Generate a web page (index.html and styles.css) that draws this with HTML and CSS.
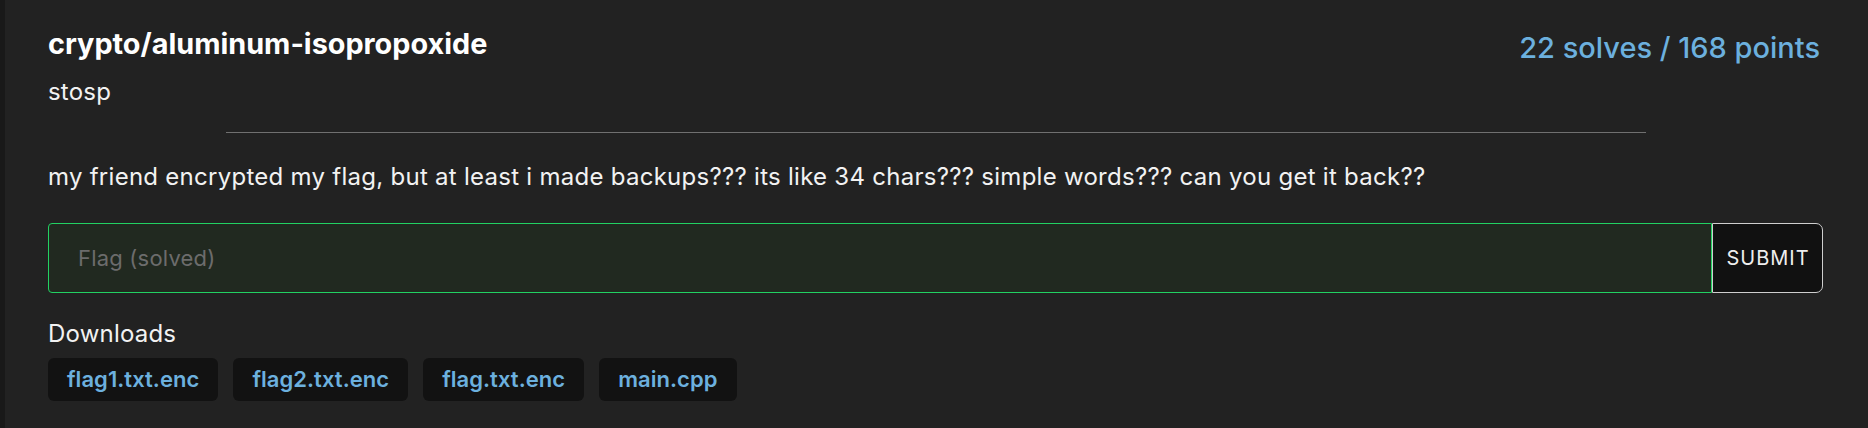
FILE: index.html
```html
<!DOCTYPE html>
<html lang="en">
<head>
<meta charset="utf-8">
<title>crypto/aluminum-isopropoxide</title>
<link rel="stylesheet" href="styles.css">
</head>
<body>
<div class="page">
  <section class="challenge">
    <div class="header">
      <h1 class="title">crypto/aluminum-isopropoxide</h1>
      <div class="stats">22 solves / 168 points</div>
    </div>
    <div class="author">stosp</div>
    <hr class="divider">
    <p class="description">my friend encrypted my flag, but at least i made backups??? its like 34 chars??? simple words??? can you get it back??</p>
    <form class="flag-form">
      <input class="flag-input" type="text" placeholder="Flag (solved)">
      <button class="submit" type="button">SUBMIT</button>
    </form>
    <div class="downloads-label">Downloads</div>
    <div class="downloads">
      <a class="chip" href="#">flag1.txt.enc</a>
      <a class="chip" href="#">flag2.txt.enc</a>
      <a class="chip" href="#">flag.txt.enc</a>
      <a class="chip" href="#">main.cpp</a>
    </div>
  </section>
</div>
</body>
</html>
```
FILE: styles.css
```css
* { box-sizing: border-box; }
html, body { margin: 0; padding: 0; }
body {
  background: #222222;
  font-family: Inter, "Noto Sans", "Liberation Sans", sans-serif;
  color: #f2f2f2;
  height: 428px;
  overflow: hidden;
}
.page {
  border-left: 5px solid #191919;
  min-height: 428px;
}
.challenge {
  padding: 26px 45px 0 43px;
  display: flex;
  flex-direction: column;
}
.header {
  display: flex;
  justify-content: space-between;
  align-items: flex-start;
}
.title {
  margin: 0;
  font-size: 28.8px;
  line-height: 35px;
  font-weight: 700;
  color: #ffffff;
}
.stats {
  margin-top: 4px;
  margin-bottom: -4px;
  margin-right: 3px;
  font-size: 29px;
  line-height: 35px;
  font-weight: 500;
  color: #6cb0de;
}
.author {
  margin-top: 16px;
  font-size: 24px;
  line-height: 29px;
  letter-spacing: 0.2px;
}
.divider {
  width: 80%;
  margin: 26px auto 0;
  border: 0;
  height: 1px;
  background: #707070;
}
.description {
  margin: 29px 0 0;
  font-size: 24px;
  line-height: 29px;
  letter-spacing: 0.27px;
}
.flag-form {
  margin-top: 32px;
  display: flex;
  height: 70px;
}
.flag-input {
  flex: 1;
  height: 70px;
  background: #212920;
  border: 1px solid #22d162;
  border-radius: 4px 0 0 4px;
  padding: 0 29px;
  font-family: inherit;
  font-size: 22px;
  letter-spacing: 0.2px;
  color: #eee;
  outline: none;
}
.flag-input::placeholder { color: #6c6c6c; }
.submit {
  width: 111px;
  height: 70px;
  background: #111111;
  border: 1px solid #cfcfcf;
  border-radius: 0 7px 7px 0;
  color: #eeeeee;
  font-family: inherit;
  font-size: 20px;
  letter-spacing: 1px;
  padding: 0 0 0 1px;
}
.downloads-label {
  margin-top: 26px;
  font-size: 24px;
  line-height: 29px;
  letter-spacing: 0.2px;
}
.downloads {
  margin-top: 10px;
  display: flex;
  gap: 15px;
}
.chip {
  display: block;
  height: 43px;
  line-height: 43px;
  padding: 0 19px;
  background: #121212;
  border-radius: 6px;
  color: #6cb0de;
  font-size: 22px;
  font-weight: 600;
  letter-spacing: 0.05px;
  text-decoration: none;
}
```
